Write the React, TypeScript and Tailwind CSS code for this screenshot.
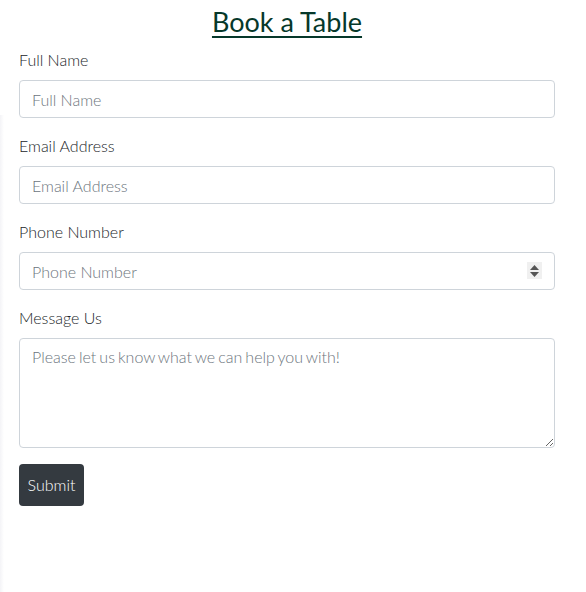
import React from "react";

export default function App() {
  const inputCls =
    "block w-full h-[38px] rounded-[4px] border border-[#ced4da] bg-white px-[12px] text-[16px] font-light text-[#495057] placeholder:text-[#6c757d] outline-none";
  return (
    <div
      className="relative min-h-[592px] w-[586px] bg-white pl-[19px] pr-[31px] text-[#212529]"
      style={{ fontFamily: "Lato, 'Open Sans', sans-serif" }}
    >
      <div className="pointer-events-none absolute left-0 top-[115px] bottom-0 w-[4px] bg-gradient-to-r from-[#f4f4f7] to-white" />
      <h1 className="pt-[4px] text-center text-[27px] font-normal leading-[36px] text-[#06382a] underline decoration-[2px] underline-offset-[4px]">
        Book a Table
      </h1>
      <form className="mt-[8px]">
        <div className="mb-[16px]">
          <label className="mb-[8px] block text-[16px] font-light leading-[24px]">Full Name</label>
          <input className={inputCls} placeholder="Full Name" />
        </div>
        <div className="mb-[16px]">
          <label className="mb-[8px] block text-[16px] font-light leading-[24px]">Email Address</label>
          <input className={inputCls} placeholder="Email Address" />
        </div>
        <div className="mb-[16px]">
          <label className="mb-[8px] block text-[16px] font-light leading-[24px]">Phone Number</label>
          <div className="relative">
            <input className={inputCls} placeholder="Phone Number" />
            <div className="absolute right-[13px] top-[10px] flex h-[17px] w-[15px] flex-col items-center justify-center gap-[2px] bg-[#f0f0f0]">
              <svg width="9" height="5" viewBox="0 0 9 5">
                <path d="M0 5 L4.5 0 L9 5 Z" fill="#555" />
              </svg>
              <svg width="9" height="5" viewBox="0 0 9 5">
                <path d="M0 0 L4.5 5 L9 0 Z" fill="#555" />
              </svg>
            </div>
          </div>
        </div>
        <div className="mb-[16px]">
          <label className="mb-[8px] block text-[16px] font-light leading-[24px]">Message Us</label>
          <textarea
            rows={4}
            className="block h-[110px] w-full rounded-[4px] border border-[#ced4da] bg-white px-[12px] py-[6px] text-[16px] font-light leading-[24px] text-[#495057] [word-spacing:-1.3px] placeholder:text-[#6c757d] outline-none"
            placeholder="Please let us know what we can help you with!"
          />
        </div>
        <button
          type="button"
          className="flex h-[42px] w-[65px] items-center justify-center rounded-[4px] bg-[#343a40] text-[16px] font-light text-white"
        >
          Submit
        </button>
      </form>
    </div>
  );
}
